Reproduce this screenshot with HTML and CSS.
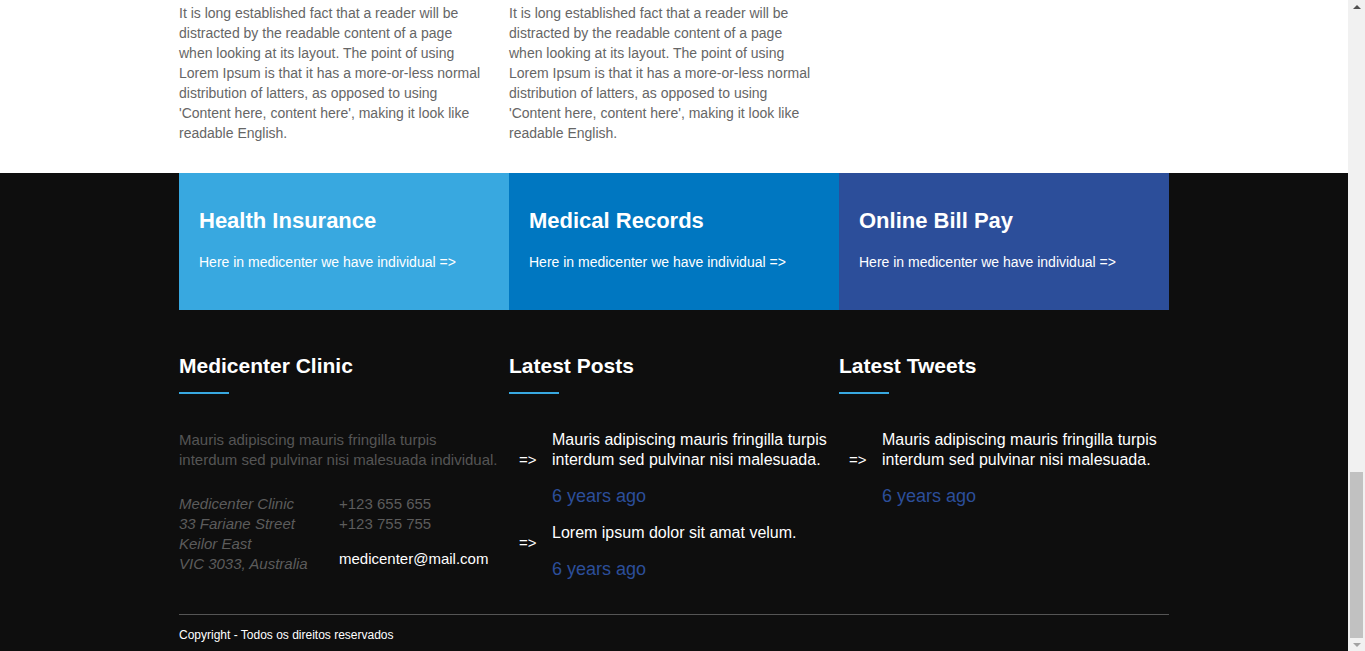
FILE: index.html
```html
<!DOCTYPE html>
<html lang="en">
<head>
<meta charset="utf-8">
<title>Medicenter</title>
<link rel="stylesheet" href="styles.css">
</head>
<body>
<div class="page">
  <section class="intro">
    <div class="container cols">
      <p class="intro-text">It is long established fact that a reader will be distracted by the readable content of a page when looking at its layout. The point of using Lorem Ipsum is that it has a more-or-less normal distribution of latters, as opposed to using 'Content here, content here', making it look like readable English.</p>
      <p class="intro-text">It is long established fact that a reader will be distracted by the readable content of a page when looking at its layout. The point of using Lorem Ipsum is that it has a more-or-less normal distribution of latters, as opposed to using 'Content here, content here', making it look like readable English.</p>
      <div></div>
    </div>
  </section>
  <footer class="footer">
    <div class="container cols boxes">
      <div class="box box-light">
        <h3 class="box-title">Health Insurance</h3>
        <p class="box-text">Here in medicenter we have individual =&gt;</p>
      </div>
      <div class="box box-mid">
        <h3 class="box-title">Medical Records</h3>
        <p class="box-text">Here in medicenter we have individual =&gt;</p>
      </div>
      <div class="box box-dark">
        <h3 class="box-title">Online Bill Pay</h3>
        <p class="box-text">Here in medicenter we have individual =&gt;</p>
      </div>
    </div>
    <div class="container cols widgets">
      <div class="widget">
        <h2 class="widget-title">Medicenter Clinic</h2>
        <p class="about">Mauris adipiscing mauris fringilla turpis interdum sed pulvinar nisi malesuada individual.</p>
        <div class="contact">
          <address class="address">Medicenter Clinic<br>33 Fariane Street<br>Keilor East<br>VIC 3033, Australia</address>
          <div class="phones">
            <div>+123 655 655</div>
            <div>+123 755 755</div>
            <div class="email">medicenter@mail.com</div>
          </div>
        </div>
      </div>
      <div class="widget">
        <h2 class="widget-title">Latest Posts</h2>
        <ul class="posts">
          <li class="post">
            <span class="arrow">=&gt;</span>
            <p class="post-text">Mauris adipiscing mauris fringilla turpis interdum sed pulvinar nisi malesuada.</p>
            <span class="post-time">6 years ago</span>
          </li>
          <li class="post">
            <span class="arrow">=&gt;</span>
            <p class="post-text">Lorem ipsum dolor sit amat velum.</p>
            <span class="post-time">6 years ago</span>
          </li>
        </ul>
      </div>
      <div class="widget">
        <h2 class="widget-title">Latest Tweets</h2>
        <ul class="posts">
          <li class="post">
            <span class="arrow">=&gt;</span>
            <p class="post-text">Mauris adipiscing mauris fringilla turpis interdum sed pulvinar nisi malesuada.</p>
            <span class="post-time">6 years ago</span>
          </li>
        </ul>
      </div>
    </div>
    <div class="container bottom">
      <p class="copyright">Copyright - Todos os direitos reservados</p>
    </div>
  </footer>
</div>
<div class="scrollbar">
  <div class="sb-arrow sb-up"></div>
  <div class="sb-track"><div class="sb-thumb"></div></div>
  <div class="sb-arrow sb-down"></div>
</div>
</body>
</html>
```

FILE: styles.css
```css
* { box-sizing: border-box; }
html, body { margin: 0; padding: 0; height: 651px; overflow: hidden; }
body {
  display: flex;
  font-family: "Liberation Sans", Arial, sans-serif;
  background: #ffffff;
}
.page { flex: 1; min-width: 0; display: flex; flex-direction: column; }
.container { width: 990px; margin: 0 auto; }
.cols { display: grid; grid-template-columns: repeat(3, 330px); }

.intro { background: #fff; padding: 3px 0 30px; }
.intro-text {
  margin: 0;
  width: 305px;
  font-size: 14px;
  line-height: 20px;
  color: #666666;
}

.footer { background: #0e0e0e; flex: 1; }
.box { height: 137px; padding: 35px 20px 0; color: #fff; }
.box-light { background: #38a8e0; }
.box-mid { background: #0077c1; }
.box-dark { background: #2c4e9a; }
.box-title { margin: 0; font-size: 22px; line-height: 26px; font-weight: bold; }
.box-text { margin: 18px 0 0; font-size: 14px; line-height: 20px; }

.widgets { padding-top: 44px; }
.widget-title {
  margin: 0;
  font-size: 21px;
  line-height: 24px;
  font-weight: bold;
  color: #fff;
}
.widget-title::after {
  content: "";
  display: block;
  width: 50px;
  height: 2px;
  margin-top: 14px;
  background: #38a8e0;
}
.about {
  margin: 36px 0 0;
  width: 320px;
  font-size: 15px;
  line-height: 20px;
  color: #555555;
}
.contact { display: flex; margin-top: 24px; font-size: 15px; line-height: 20px; color: #5c5c5c; }
.address { width: 160px; font-style: italic; }
.email { margin-top: 15px; color: #fff; }

.posts { list-style: none; margin: 36px 0 0; padding: 0; }
.post {
  display: grid;
  grid-template-columns: 43px 1fr;
  margin-bottom: 15px;
}
.arrow {
  grid-column: 1;
  grid-row: 1;
  align-self: center;
  padding-left: 10px;
  margin-top: 10px;
  margin-bottom: -10px;
  font-size: 15px;
  line-height: 20px;
  color: #fff;
}
.post-text {
  grid-column: 2;
  grid-row: 1;
  margin: 0;
  font-size: 16px;
  line-height: 20px;
  color: #fff;
}
.post-time {
  grid-column: 2;
  grid-row: 2;
  margin-top: 14px;
  font-size: 18px;
  line-height: 24px;
  color: #2c4e9a;
}

.bottom { margin-top: 18px; border-top: 1px solid #555555; padding-top: 12px; }
.copyright { margin: 0; font-size: 12px; line-height: 16px; color: #fff; }

.scrollbar {
  width: 17px;
  flex: none;
  background: #f1f1f1;
  display: flex;
  flex-direction: column;
}
.sb-arrow { display: flex; align-items: center; justify-content: center; }
.sb-up { height: 14px; }
.sb-down { height: 13px; }
.sb-up::before {
  content: "";
  border-left: 4px solid transparent;
  border-right: 4px solid transparent;
  border-bottom: 4px solid #505050;
}
.sb-down::before {
  content: "";
  border-left: 4px solid transparent;
  border-right: 4px solid transparent;
  border-top: 4px solid #a3a3a3;
}
.sb-track { flex: 1; display: flex; flex-direction: column; justify-content: flex-end; padding: 0 2px; }
.sb-thumb { height: 166px; background: #c1c1c1; }
```
